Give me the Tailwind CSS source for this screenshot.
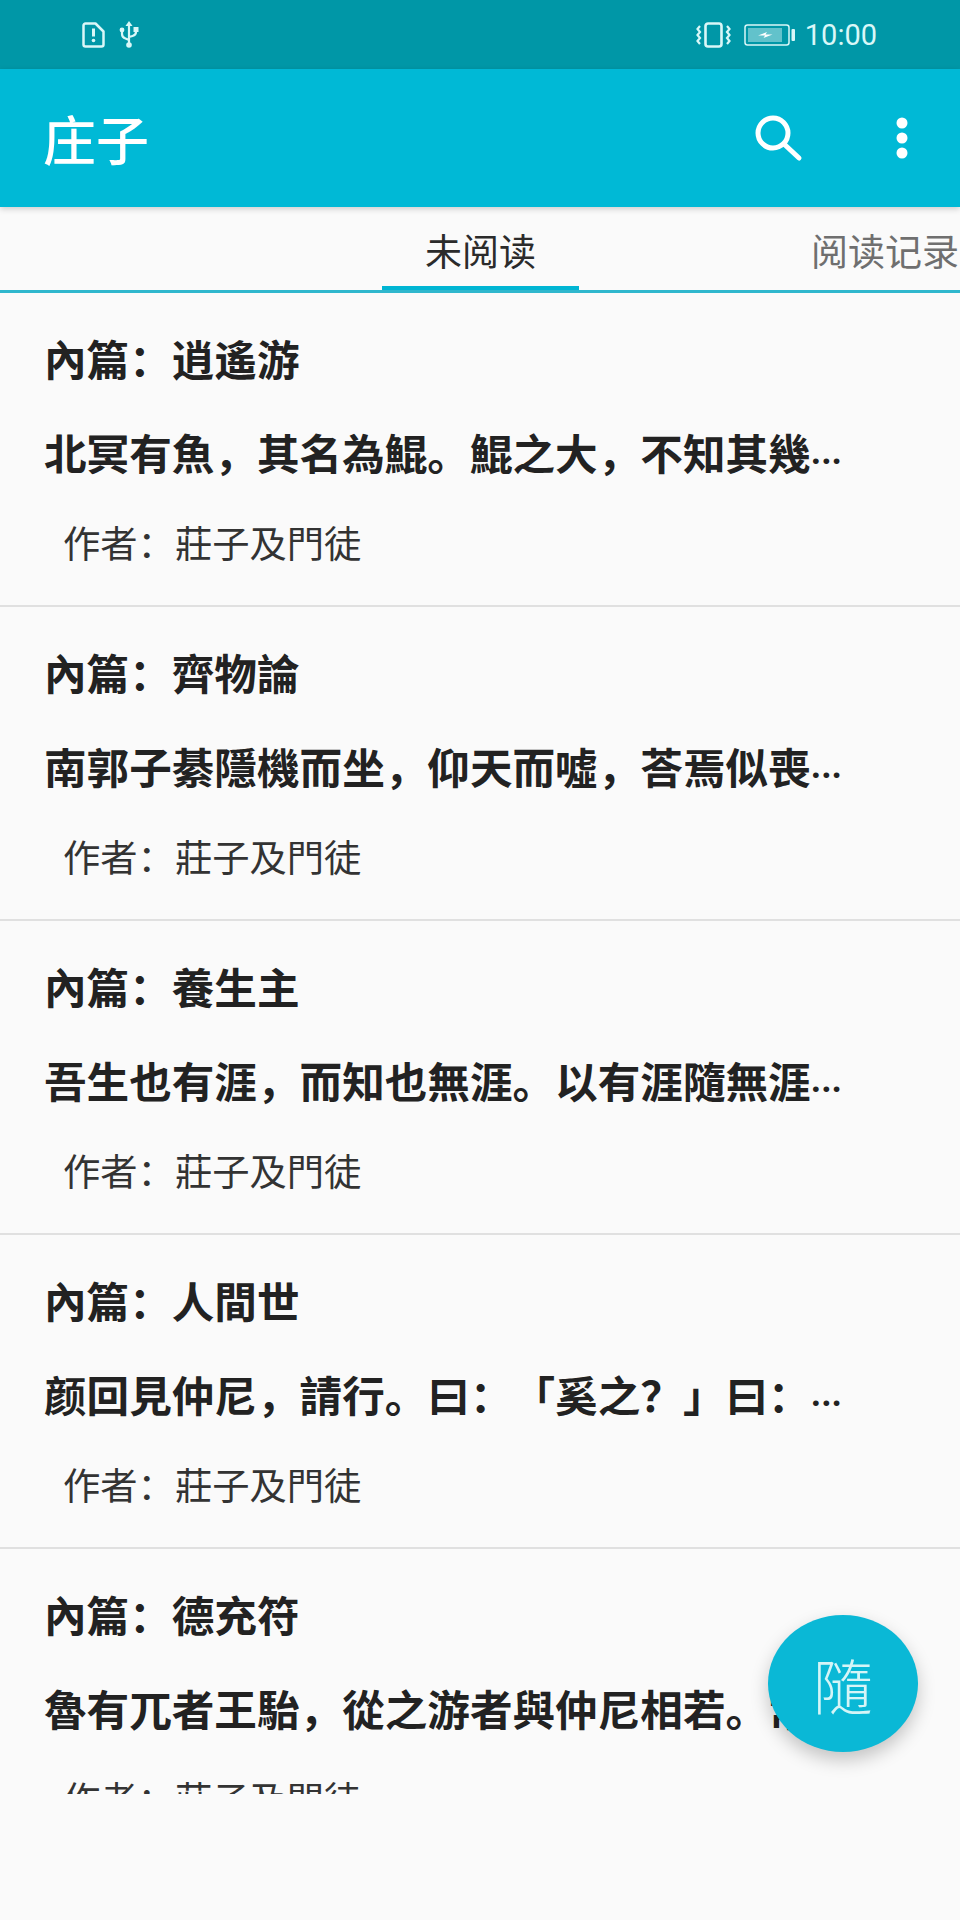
<!DOCTYPE html>
<html lang="zh">
<head>
<meta charset="UTF-8">
<meta name="viewport" content="width=device-width, initial-scale=1.0">
<title>庄子</title>
<script src="https://cdn.jsdelivr.net/npm/@tailwindcss/browser@4"></script>
</head>
<body class="bg-[#fafafa] font-['Noto_Sans_CJK_SC','Noto_Sans_CJK_TC',sans-serif] [text-spacing-trim:space-all]">
<div class="relative w-[960px] h-[1920px] overflow-hidden bg-[#fafafa]">

  <!-- status bar -->
  <div class="h-[69px] bg-[#0097a7] flex items-center justify-between pl-[82px] pr-[83px] text-[#d9f7f8]">
    <div class="flex items-center gap-[14px]">
      <svg width="23" height="26" viewBox="0 0 23 26" fill="none" stroke="currentColor" stroke-width="2.5">
        <path d="M3.5 1.5h10l8 8v13a2 2 0 0 1-2 2h-16a2 2 0 0 1-2-2v-19a2 2 0 0 1 2-2z" stroke-linejoin="round"/>
        <path d="M11.5 6.5v8" stroke-width="3"/>
        <circle cx="11.5" cy="18.5" r="1.8" fill="currentColor" stroke="none"/>
      </svg>
      <svg width="20" height="27" viewBox="0 0 20 27" fill="none" stroke="currentColor" stroke-width="2.2">
        <path d="M10 4v19M3 10v3q0 3.500 3.500 4.500L10 19M17 9v2q0 3-3.500 4L10 16"/>
        <path d="M10 0l3.500 5h-7z" fill="currentColor" stroke="none"/>
        <circle cx="10" cy="24" r="2.800" fill="currentColor" stroke="none"/>
        <circle cx="3" cy="9" r="2.400" fill="currentColor" stroke="none"/>
        <rect x="14.500" y="6" width="5" height="5" fill="currentColor" stroke="none"/>
      </svg>
    </div>
    <div class="flex items-center">
      <svg width="37" height="26" viewBox="0 0 37 26" fill="none" stroke="currentColor" stroke-width="2.2">
        <rect x="10.500" y="1.500" width="16" height="23" rx="2.500" stroke-width="2.600"/>
        <path d="M5 4l-2.500 3 2.500 3-2.500 3 2.500 3-2.500 3 2.500 3"/>
        <path d="M32 4l2.500 3-2.500 3 2.500 3-2.500 3 2.500 3-2.500 3"/>
      </svg>
      <svg class="ml-[12px]" width="51" height="22" viewBox="0 0 51 22" fill="none">
        <rect x="1" y="1" width="44" height="20" rx="2.500" stroke="#d9f7f8" stroke-width="1.500"/>
        <rect x="4" y="4" width="34" height="14" fill="#d9f7f8" fill-opacity="0.45"/>
        <rect x="47.500" y="5" width="3.500" height="12" rx="1" fill="#d9f7f8"/>
        <path d="M14 11.500l9-3.500-1.500 2.500h7l-9 3.500 1.500-2.500z" fill="#fff"/>
      </svg>
      <span class="ml-[10px] font-['Roboto',sans-serif] text-[29px] leading-[36px]">10:00</span>
    </div>
  </div>

  <!-- app bar -->
  <div class="relative z-10 h-[138px] bg-[#00b9d6] shadow-[0_2px_6px_rgba(0,0,0,0.18)] flex items-center justify-between pl-[43px] pr-[52px] text-white">
    <h1 class="text-[53px] leading-[58px] font-medium">庄子</h1>
    <div class="flex items-center gap-[93px]">
      <svg width="50" height="50" viewBox="0 0 50 50" fill="none" stroke="#fff" stroke-width="5" stroke-linecap="round">
        <circle cx="20" cy="20" r="15"/>
        <path d="M31 31l15 14"/>
      </svg>
      <svg width="12" height="42" viewBox="0 0 12 42" fill="#fff">
        <circle cx="6" cy="6" r="5.500"/>
        <circle cx="6" cy="21" r="5.500"/>
        <circle cx="6" cy="36" r="5.500"/>
      </svg>
    </div>
  </div>

  <!-- tabs -->
  <div class="h-[86px] border-b-[3px] border-[#2fb7cd] flex pl-[382px] overflow-hidden text-[37px] leading-[50px]">
    <div class="w-[197px] h-[86px] shrink-0 border-b-[7px] border-[#00b5d3] pt-[18px] text-center text-[#2b2b2b]">未阅读</div>
    <div class="ml-[232px] shrink-0 pt-[18px] text-[#6f6f6f] whitespace-nowrap">阅读记录</div>
  </div>

  <!-- list -->
  <div id="list" class="h-[1501px] overflow-hidden">
    <div class="h-[314px] border-b-2 border-[#e0e0e0] pl-[44px] pt-[40px]">
      <div class="text-[42.6px] leading-[50px] font-bold text-[#222]">內篇：逍遙游</div>
      <div class="mt-[44px] whitespace-nowrap text-[42.6px] leading-[50px] font-bold text-[#222]">北冥有魚，其名為鯤。鯤之大，不知其幾<span class="font-['Roboto',sans-serif] text-[36px] align-[6px]">...</span></div>
      <div class="mt-[40px] pl-[19px] text-[37.3px] leading-[50px] text-[#333]">作者：莊子及門徒</div>
    </div>
    <div class="h-[314px] border-b-2 border-[#e0e0e0] pl-[44px] pt-[40px]">
      <div class="text-[42.6px] leading-[50px] font-bold text-[#222]">內篇：齊物論</div>
      <div class="mt-[44px] whitespace-nowrap text-[42.6px] leading-[50px] font-bold text-[#222]">南郭子綦隱機而坐，仰天而噓，荅焉似喪<span class="font-['Roboto',sans-serif] text-[36px] align-[6px]">...</span></div>
      <div class="mt-[40px] pl-[19px] text-[37.3px] leading-[50px] text-[#333]">作者：莊子及門徒</div>
    </div>
    <div class="h-[314px] border-b-2 border-[#e0e0e0] pl-[44px] pt-[40px]">
      <div class="text-[42.6px] leading-[50px] font-bold text-[#222]">內篇：養生主</div>
      <div class="mt-[44px] whitespace-nowrap text-[42.6px] leading-[50px] font-bold text-[#222]">吾生也有涯，而知也無涯。以有涯隨無涯<span class="font-['Roboto',sans-serif] text-[36px] align-[6px]">...</span></div>
      <div class="mt-[40px] pl-[19px] text-[37.3px] leading-[50px] text-[#333]">作者：莊子及門徒</div>
    </div>
    <div class="h-[314px] border-b-2 border-[#e0e0e0] pl-[44px] pt-[40px]">
      <div class="text-[42.6px] leading-[50px] font-bold text-[#222]">內篇：人間世</div>
      <div class="mt-[44px] whitespace-nowrap text-[42.6px] leading-[50px] font-bold text-[#222]">颜回見仲尼，請行。曰：「奚之？」曰：<span class="font-['Roboto',sans-serif] text-[36px] align-[6px]">...</span></div>
      <div class="mt-[40px] pl-[19px] text-[37.3px] leading-[50px] text-[#333]">作者：莊子及門徒</div>
    </div>
    <div class="h-[314px] border-b-2 border-[#e0e0e0] pl-[44px] pt-[40px]">
      <div class="text-[42.6px] leading-[50px] font-bold text-[#222]">內篇：德充符</div>
      <div class="mt-[44px] whitespace-nowrap text-[42.6px] leading-[50px] font-bold text-[#222]">魯有兀者王駘，從之游者與仲尼相若。常<span class="font-['Roboto',sans-serif] text-[36px] align-[6px]">...</span></div>
      <div class="mt-[40px] pl-[19px] text-[37.3px] leading-[50px] text-[#333]">作者：莊子及門徒</div>
    </div>
  </div>

  <!-- fab -->
  <button class="absolute left-[768px] top-[1615px] w-[150px] h-[137px] rounded-[50%] bg-[#0ab8d6] shadow-[0_8px_18px_rgba(0,0,0,0.22)] flex items-center justify-center text-[60px] leading-none font-light text-[#d5f5f7]">隨</button>
</div>
</body>
</html>
